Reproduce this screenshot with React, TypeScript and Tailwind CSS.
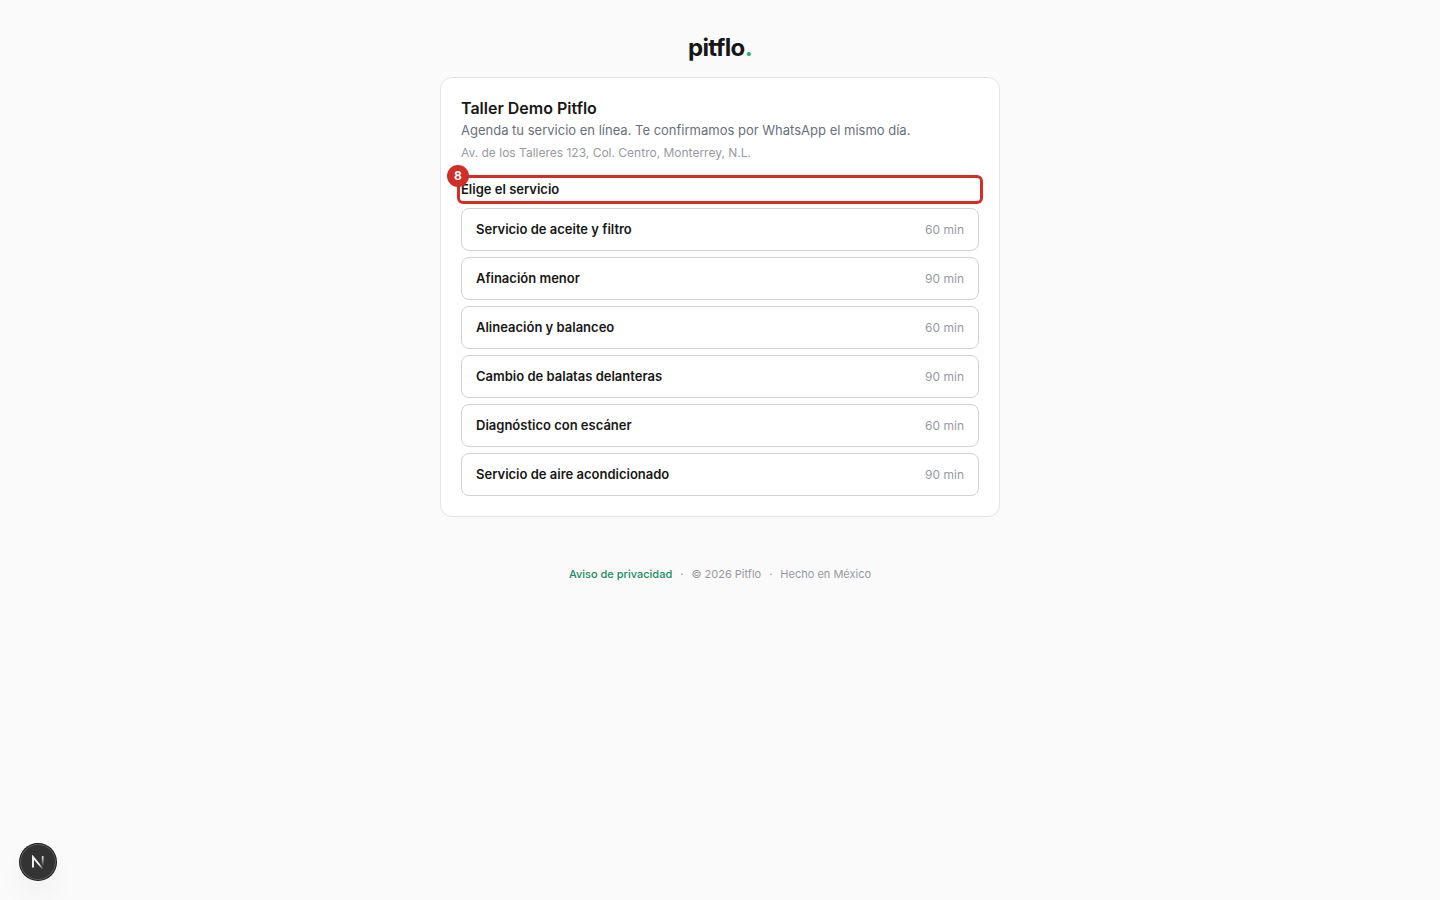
import React from 'react';

const services = [
  { name: 'Servicio de aceite y filtro', minutes: 60 },
  { name: 'Afinación menor', minutes: 90 },
  { name: 'Alineación y balanceo', minutes: 60 },
  { name: 'Cambio de balatas delanteras', minutes: 90 },
  { name: 'Diagnóstico con escáner', minutes: 60 },
  { name: 'Servicio de aire acondicionado', minutes: 90 },
];

function Logo() {
  return (
    <div className="text-center text-2xl leading-8 font-bold tracking-tight text-[#171717]">
      pitflo<span className="text-[#2fac7e]">.</span>
    </div>
  );
}

function ServiceList() {
  return (
    <ul className="mt-2 flex flex-col gap-1.5">
      {services.map((service) => (
        <li key={service.name}>
          <button
            type="button"
            className="flex w-full cursor-pointer items-center justify-between rounded-lg border border-[#d2d2d4] bg-white px-3.5 py-2.5 text-left hover:bg-gray-50"
          >
            <span className="text-[13px] leading-[21px] font-semibold text-[#171717]">{service.name}</span>
            <span className="text-xs text-[#979a9f]">{service.minutes} min</span>
          </button>
        </li>
      ))}
    </ul>
  );
}

function DevToolsButton() {
  return (
    <button
      type="button"
      aria-label="Next.js"
      className="fixed bottom-5 left-5 flex size-9 items-center justify-center rounded-full bg-[#333] inset-ring inset-ring-white/20 shadow-[0_0_0_1px_#171717,0_16px_32px_-8px_rgba(0,0,0,0.14)]"
    >
      <svg width="14" height="14" viewBox="0 0 14 14" fill="none">
        <defs>
          <linearGradient id="n-diagonal" x1="8" y1="8.5" x2="12.4" y2="14" gradientUnits="userSpaceOnUse">
            <stop stopColor="white" />
            <stop offset="1" stopColor="white" stopOpacity="0" />
          </linearGradient>
          <linearGradient id="n-stem" x1="11" y1="1" x2="11" y2="11" gradientUnits="userSpaceOnUse">
            <stop stopColor="white" />
            <stop offset="1" stopColor="white" stopOpacity="0" />
          </linearGradient>
        </defs>
        <path d="M2 12.6V2L11.8 14" stroke="url(#n-diagonal)" strokeWidth="1.8" />
        <path d="M11.7 1.2V11" stroke="url(#n-stem)" strokeWidth="1.7" />
      </svg>
    </button>
  );
}

export default function App() {
  return (
    <div className="min-h-screen bg-[#fafafa] px-4 pt-8 pb-12 font-['Inter',sans-serif]">
      <Logo />

      <main className="mx-auto mt-[13px] max-w-[560px] rounded-xl border border-[#e4e4e6] bg-white p-5">
        <h1 className="text-base leading-5 font-semibold text-[#171717]">Taller Demo Pitflo</h1>
        <p className="mt-0.5 text-[13px] leading-5 text-[#6a6f7b]">
          Agenda tu servicio en línea. Te confirmamos por WhatsApp el mismo día.
        </p>
        <p className="mt-[3px] text-xs leading-5 text-[#979a9f]">
          Av. de los Talleres 123, Col. Centro, Monterrey, N.L.
        </p>

        <section className="mt-4">
          <div className="relative">
            {/* Annotation frame and its number */}
            <div className="absolute -inset-1 rounded-md border-3 border-[#d12e27]" />
            <h2 className="relative text-[13px] leading-[21px] font-semibold text-[#171717]">Elige el servicio</h2>
            <span className="absolute -top-3.5 -left-3.5 flex size-[22px] items-center justify-center rounded-full bg-[#d12e27] text-xs font-bold text-white">
              8
            </span>
          </div>
          <ServiceList />
        </section>
      </main>

      <footer className="mt-12 flex justify-center gap-2 text-[11px] leading-[18px] text-[#979a9f]">
        <a href="#privacidad" className="font-medium text-[#1c8a5f]">Aviso de privacidad</a>
        <span>·</span>
        <span>© 2026 Pitflo</span>
        <span>·</span>
        <span>Hecho en México</span>
      </footer>

      <DevToolsButton />
    </div>
  );
}
